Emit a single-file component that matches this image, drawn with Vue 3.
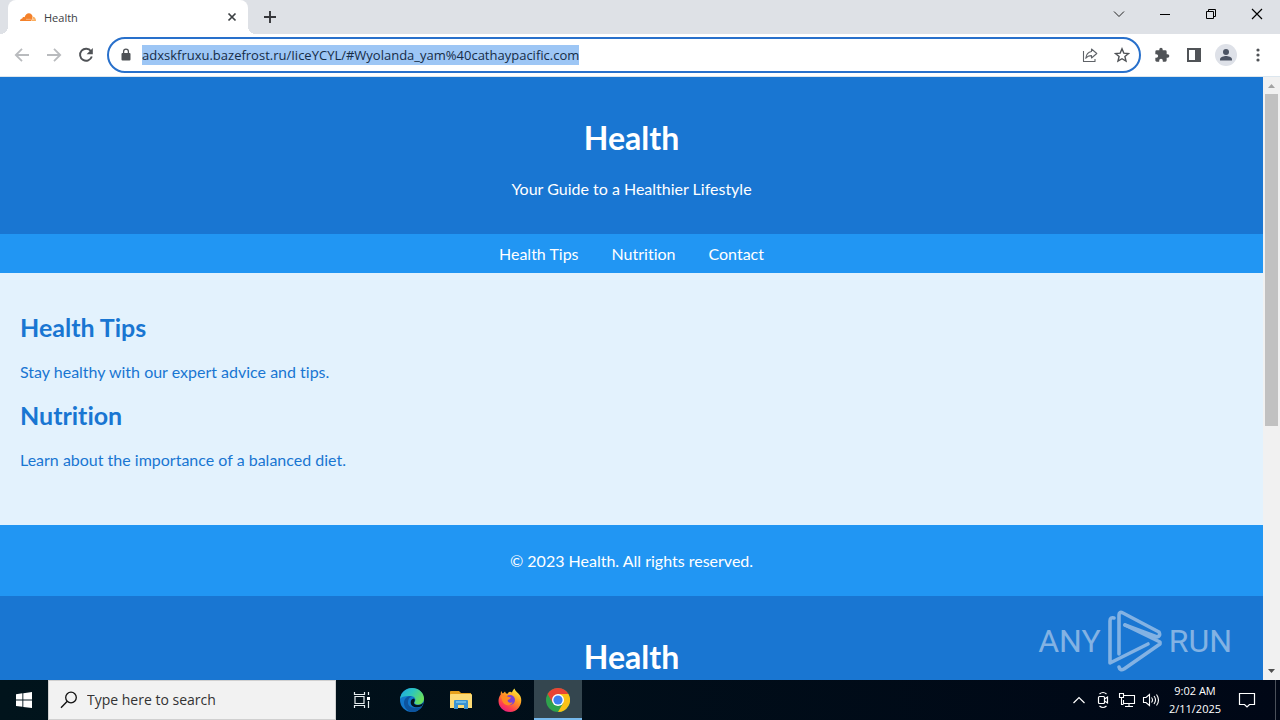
<script setup>
const url = 'adxskfruxu.bazefrost.ru/IiceYCYL/#Wyolanda_yam%40cathaypacific.com'
const links = ['Health Tips', 'Nutrition', 'Contact']
const articles = [
  { title: 'Health Tips', text: 'Stay healthy with our expert advice and tips.' },
  { title: 'Nutrition', text: 'Learn about the importance of a balanced diet.' },
]
</script>

<template>
  <div class="desktop">
    <div class="tabstrip">
      <div class="tab">
        <svg width="16" height="16" viewBox="0 0 16 16">
          <path d="M0 12c0-1.700 1-2.600 2.300-2.600.1-1.200 1.300-1.800 2.300-1.200C5.400 5.800 7 4.300 8.900 4.300c2 0 3.300 1.300 3.700 3.200L11.300 12z" fill="#f4812a" />
          <path d="M12.800 7.700c1.900 0 3.200 1.600 3.200 4.300h-4.300z" fill="#fbad5c" />
          <path d="M6 10.300h4.800M12 10.300h2.300" stroke="#fff" stroke-width=".4" />
        </svg>
        <span class="tab-title">Health</span>
        <button class="tab-close" aria-label="Close tab">
          <svg width="16" height="16" viewBox="0 0 16 16"><path d="M4.500 4.500l7 7M11.500 4.500l-7 7" stroke="#3c4043" stroke-width="1.700" /></svg>
        </button>
      </div>
      <button class="new-tab" aria-label="New tab">
        <svg width="16" height="16" viewBox="0 0 16 16"><path d="M8 2v12M2 8h12" stroke="#35363a" stroke-width="1.900" /></svg>
      </button>
      <div class="window-buttons">
        <button aria-label="Search tabs"><svg width="12" height="12" viewBox="0 0 12 12"><path d="M1 3.500l5 5 5-5" fill="none" stroke="#222" /></svg></button>
        <button aria-label="Minimize"><svg width="12" height="12" viewBox="0 0 12 12"><path d="M1 6.500h10" stroke="#000" /></svg></button>
        <button aria-label="Restore"><svg width="12" height="12" viewBox="0 0 12 12"><path d="M1.500 3.500h7v7h-7zM3.500 3.500v-2h7v7h-2" fill="none" stroke="#000" /></svg></button>
        <button aria-label="Close"><svg width="12" height="12" viewBox="0 0 12 12"><path d="M1 1l10 10M11 1L1 11" stroke="#000" stroke-width="1.200" /></svg></button>
      </div>
    </div>

    <div class="toolbar">
      <button class="tool" aria-label="Back"><svg width="16" height="16" viewBox="0 0 16 16"><path d="M15 8H2M8 1.800L1.800 8 8 14.200" fill="none" stroke="#b9bbbe" stroke-width="1.800" /></svg></button>
      <button class="tool" aria-label="Forward"><svg width="16" height="16" viewBox="0 0 16 16"><path d="M1 8h13M8 1.800L14.200 8 8 14.200" fill="none" stroke="#b9bbbe" stroke-width="1.800" /></svg></button>
      <button class="tool" aria-label="Reload"><svg width="16" height="16" viewBox="0 0 16 16"><path d="M13 4.300A6 6 0 1 0 13.800 9.500" fill="none" stroke="#4f5256" stroke-width="1.900" /><path d="M14.800 1v6.200H8.600z" fill="#4f5256" /></svg></button>
      <div class="omnibox">
        <svg width="16" height="16" viewBox="0 0 16 16"><rect x="3.500" y="6" width="9" height="7.500" rx="1" fill="#4f5256" /><path d="M5.600 6.500V4.600a2.400 2.400 0 0 1 4.800 0v1.900" fill="none" stroke="#4f5256" stroke-width="1.300" /></svg>
        <input class="address" type="text" :value="url" aria-label="Address" spellcheck="false" />
        <div class="omnibox-actions">
          <button aria-label="Share"><svg width="16" height="16" viewBox="0 0 16 16"><path d="M1.500 4v10.500H13V12M9.500 2l5.300 4.500L9.500 11V8.600C7 8.600 5.200 9.300 3.800 11.300 4.200 7.500 6.300 5 9.500 4.500z" fill="none" stroke="#5f6368" stroke-width="1.100" stroke-linejoin="round" /></svg></button>
          <button aria-label="Bookmark"><svg width="16" height="16" viewBox="0 0 16 16"><path d="M8 1.800l1.800 4.300 4.700.4-3.600 3 1.100 4.600L8 11.700 4 14.100l1.100-4.600-3.600-3 4.700-.4z" fill="none" stroke="#4f5256" stroke-width="1.400" /></svg></button>
        </div>
      </div>
      <div class="extras">
        <button aria-label="Extensions"><svg width="16" height="16" viewBox="0 0 24 24"><path d="M20.500 11H19V7a2 2 0 0 0-2-2h-4V3.500a2.500 2.500 0 0 0-5 0V5H4a2 2 0 0 0-2 2v3.800h1.500a2.700 2.700 0 0 1 0 5.400H2V20c0 1.100.9 2 2 2h3.800v-1.500a2.700 2.700 0 0 1 5.400 0V22H17a2 2 0 0 0 2-2v-4h1.500a2.500 2.500 0 0 0 0-5z" fill="#505357" /></svg></button>
        <button aria-label="Side panel"><svg width="16" height="16" viewBox="0 0 16 16"><path d="M1 1h14v14H1zM3 3v10h6V3z" fill="#505357" fill-rule="evenodd" /></svg></button>
        <button aria-label="Profile"><svg width="22" height="22" viewBox="0 0 22 22"><circle cx="11" cy="11" r="11" fill="#dee1e8" /><circle cx="11" cy="8" r="3" fill="#4c5464" /><path d="M5 16.500v-1.300C5 13 9 12 11 12s6 1 6 3.200v1.300z" fill="#4c5464" /></svg></button>
        <button aria-label="Menu"><svg width="16" height="16" viewBox="0 0 16 16" fill="#505357"><circle cx="8" cy="3" r="1.600" /><circle cx="8" cy="8" r="1.600" /><circle cx="8" cy="13" r="1.600" /></svg></button>
      </div>
    </div>

    <div class="viewport">
      <div class="page">
        <header class="hero">
          <h1>Health</h1>
          <p>Your Guide to a Healthier Lifestyle</p>
        </header>
        <nav class="menu">
          <a v-for="link in links" :key="link" href="#">{{ link }}</a>
        </nav>
        <main class="content">
          <section v-for="item in articles" :key="item.title">
            <h2>{{ item.title }}</h2>
            <p>{{ item.text }}</p>
          </section>
        </main>
        <footer class="foot"><p>© 2023 Health. All rights reserved.</p></footer>
        <header class="hero">
          <h1>Health</h1>
        </header>
      </div>
      <div class="scrollbar">
        <svg width="17" height="17" viewBox="0 0 17 17"><path d="M5 11l3.500-4 3.500 4z" fill="#a3a3a3" /></svg>
        <div class="thumb"></div>
        <svg class="down" width="17" height="17" viewBox="0 0 17 17"><path d="M5 6l3.500 4L12 6z" fill="#505050" /></svg>
      </div>
      <div class="watermark">
        <span>ANY</span>
        <svg width="56" height="62" viewBox="0 0 56 62" fill="none" stroke="currentColor" stroke-width="3.600" stroke-linejoin="round" stroke-linecap="round">
          <path d="M7 8Q3 7 3 11V53L41 34" />
          <path d="M12 44V5Q12 1 16 3L52 22Q54 26 50 27L18 15" />
          <path d="M18 15L53 32V34L17 59Q13 61 12 57" />
        </svg>
        <span>RUN</span>
      </div>
    </div>

    <div class="taskbar">
      <button class="task start" aria-label="Start"><svg width="16" height="16" viewBox="0 0 16 16" fill="#fff"><path d="M0 2.200L6.400 1.300V7.500H0zM7.300 1.200L16 0v7.500H7.300zM0 8.500h6.400v6.300L0 13.900zM7.300 8.500H16V16l-8.700-1.100z" /></svg></button>
      <label class="search">
        <svg width="18" height="18" viewBox="0 0 18 18"><circle cx="11" cy="6.500" r="5.300" fill="none" stroke="#111" stroke-width="1.300" /><path d="M7.300 10.300L1 16.800" stroke="#111" stroke-width="1.400" /></svg>
        <input type="text" placeholder="Type here to search" aria-label="Search" />
      </label>
      <button class="task" aria-label="Task view"><svg width="18" height="18" viewBox="0 0 18 18" fill="none" stroke="#e8eef0" stroke-width="1.200"><path d="M1.500 1v2.500h10V1M1.500 17v-2.500h10V17M2 5.500h9v7H2zM15.500 1v3M15.500 10v7" /><path d="M14 6h3v3h-3z" fill="#fff" stroke="none" /></svg></button>
      <button class="task" aria-label="Edge">
        <svg width="24" height="24" viewBox="0 0 24 24">
          <defs><linearGradient id="edge-top" x1="0" y1="0" x2="1" y2=".5"><stop offset="0" stop-color="#1fa5e4" /><stop offset=".5" stop-color="#2cc5c0" /><stop offset="1" stop-color="#69df5a" /></linearGradient></defs>
          <circle cx="12" cy="12" r="12" fill="#1277cb" />
          <path d="M0 11C1 4 6 0 12 0c7 0 12 5 12 10.500 0 4-3 6-6 6-2.500 0-4.500-1-3-3 1.500-2.500-1-5.500-4-5.500C6 8 2 8 0 11z" fill="url(#edge-top)" />
          <path d="M8 15c0-3 1-6 4-6.500-2-.8-7-.4-8 5.500-.6 5 3.500 9.500 8 10 4 0 8-2 10-5.500-6 3-14 1-14-3.500z" fill="#0d549e" />
          <path d="M14 10.500c1 1 1 2 .4 3.200-1.500 2 1 3.500 4 3.200 2 0 4-1 5-2.700-.4 1.700-.9 3-1.700 4.100-6 2.500-11 .2-11-3.800 0-2 1-3.700 3.300-4z" fill="#04141d" />
        </svg>
      </button>
      <button class="task" aria-label="File Explorer">
        <svg width="22" height="20" viewBox="0 0 22 20"><path d="M0 1.500Q0 1 1 1h8l2 2h10v5H0z" fill="#e6a11c" /><path d="M1 4h20q1 0 1 1v13H0V5q0-1 1-1z" fill="#fddb75" /><path d="M4 11q0-1 1-1h12q1 0 1 1v8h-4v-4H8v4H4z" fill="#3b93d1" /><path d="M6 12h10" stroke="#68b9e8" stroke-width="2" /></svg>
      </button>
      <button class="task" aria-label="Firefox">
        <svg width="24" height="24" viewBox="0 0 24 24">
          <defs><linearGradient id="fox" x1=".8" y1="0" x2=".2" y2="1"><stop offset="0" stop-color="#fff33f" /><stop offset=".4" stop-color="#ff9a22" /><stop offset=".75" stop-color="#ff3f50" /><stop offset="1" stop-color="#e3158b" /></linearGradient></defs>
          <path d="M3.500 3c.2 1 .7 2 1.400 2.600L7 3.500l1 2c.6 0 1 0 1.600.3C10.500 4 12 3.200 14 4.500c.5-1.700 1.400-3 2.600-4C17 4 22 5 23 10c.8 4-.3 7.500-2.500 10-2.200 2.600-5 4-8.500 4C5.500 24 .5 19 .5 13c0-3 1-5 2.200-6.500C2.600 5 2.800 4 3.500 3z" fill="url(#fox)" />
          <circle cx="12" cy="12" r="5" fill="#7942d8" />
          <path d="M3 8c3-1 5-.5 7 .8 1.500.6 2.700.2 3 .8-.4 1.500-2.500 1.700-3.500 3 .4 2.400 3.800 2.500 5.200 1.700-1 2.500-4.700 4.200-8 2C4.200 14.500 3.600 11 3 8z" fill="#ff8a21" />
        </svg>
      </button>
      <button class="task active" aria-label="Chrome">
        <svg width="24" height="24" viewBox="0 0 24 24">
          <circle cx="12" cy="12" r="12" fill="#2fa24c" />
          <path d="M12 6H22.400A12 12 0 0 1 12 24L17.200 15z" fill="#fbc116" />
          <path d="M6.800 15L1.600 6A12 12 0 0 1 22.400 6H12z" fill="#e94335" />
          <circle cx="12" cy="12" r="6" fill="#fff" /><circle cx="12" cy="12" r="4.600" fill="#3c7ff0" />
        </svg>
      </button>
      <div class="tray">
        <button aria-label="Hidden icons"><svg width="14" height="16" viewBox="0 0 14 16"><path d="M1.500 11L7 5.500l5.500 5.500" fill="none" stroke="#fff" stroke-width="1.200" /></svg></button>
        <button aria-label="Meet now"><svg width="14" height="18" viewBox="0 0 14 18" fill="none" stroke="#fff" stroke-width="1.200"><rect x="2.500" y="5.500" width="6" height="7" rx="1" /><path d="M8.500 8l3-2v6l-3-2M3.500 3q3.500-3 7 0M3.500 15q3.500 3 7 0" /></svg></button>
        <button aria-label="Network"><svg width="18" height="16" viewBox="0 0 18 16" fill="none" stroke="#fff" stroke-width="1.100"><path d="M6 3.500h10.500v8H5.500V8M11 11.500v3M7 14.500h8M1.500 1.500h4v4h-4zM3.500 5.500v7h2" /></svg></button>
        <button aria-label="Volume"><svg width="18" height="16" viewBox="0 0 18 16" fill="none" stroke="#fff" stroke-width="1.100"><path d="M1.500 5.500H4L7.500 2.500v11L4 10.500H1.500zM9.500 5.500q2 2.500 0 5M12 4q3 4 0 8M14.500 2.500q4 5.500 0 11" /></svg></button>
        <div class="clock"><span>9:02 AM</span><span>2/11/2025</span></div>
        <button class="notices" aria-label="Notifications"><svg width="18" height="18" viewBox="0 0 18 18"><path d="M1.500 2.500h15v11h-5L9 16l-2.500-2.500h-5z" fill="none" stroke="#fff" stroke-width="1.200" /></svg></button>
        <div class="peek"></div>
      </div>
    </div>
  </div>
</template>

<style>
body { margin: 0; }
</style>

<style scoped>
.desktop { display: flex; flex-direction: column; height: 100vh; overflow: hidden; font-family: "Open Sans", "Noto Sans", sans-serif; background: #fff; }
button { border: 0; padding: 0; background: none; display: flex; align-items: center; justify-content: center; font: inherit; flex: none; }
svg { flex: none; display: block; }

.tabstrip { display: flex; height: 34px; background: #dee1e6; flex: none; }
.tab { position: relative; display: flex; align-items: center; gap: 8px; width: 240px; box-sizing: border-box; margin-left: 8px; padding: 0 8px 0 12px; background: #fff; border-radius: 8px 8px 0 0; }
.tab::before, .tab::after { content: ""; position: absolute; bottom: 0; width: 8px; height: 8px; }
.tab::before { right: 100%; background: radial-gradient(circle at 0 0, transparent 8px, #fff 8px); }
.tab::after { left: 100%; background: radial-gradient(circle at 100% 0, transparent 8px, #fff 8px); }
.tab-title { flex: 1; font-size: 11px; color: #3c4043; }
.new-tab { width: 28px; margin-left: 8px; }
.window-buttons { display: flex; margin-left: auto; height: 28px; }
.window-buttons button { width: 46px; }

.toolbar { display: flex; align-items: center; height: 42px; border-bottom: 1px solid #dce6ee; flex: none; padding-left: 6px; }
.tool { width: 32px; height: 32px; }
.omnibox { display: flex; align-items: center; flex: 1; height: 36px; box-sizing: border-box; margin: 0 5px; padding: 0 9px; border: 2px solid #2870cb; border-radius: 18px; }
.address { field-sizing: content; height: 20px; margin-left: 8px; padding: 0; border: 0; outline: 0; background: #9dc6f5; color: #152c47; font: 13px/20px "Open Sans", "Noto Sans", sans-serif; }
.omnibox-actions { display: flex; gap: 16px; margin-left: auto; }
.extras { display: flex; padding-right: 6px; }
.extras button { width: 32px; height: 32px; }

.viewport { position: relative; display: flex; flex: 1; min-height: 0; overflow: hidden; }
.page { flex: 1; overflow: hidden; font: 16px/19px Lato, sans-serif; font-variant-ligatures: none; color: #1976d2; background: #1976d2; }
.hero { padding: 20px; text-align: center; color: #fff; background: #1976d2; }
h1 { margin: 21px 0; font-size: 32px; line-height: 40px; }
p { margin: 16px 0; }
.menu { display: flex; justify-content: center; gap: 33px; padding: 10px; background: #2196f3; }
.menu a { color: #fff; text-decoration: none; }
.content { padding: 20px 20px 40px; background: #e3f2fd; }
h2 { margin: 20px 0; font-size: 25px; line-height: 29px; }
.foot { padding: 10px; text-align: center; color: #fff; background: #2196f3; display: flow-root; }
.scrollbar { display: flex; flex-direction: column; width: 17px; background: #f1f1f1; }
.thumb { height: 55%; margin: 0 2px; background: #c1c1c1; }
.down { margin-top: auto; }
.watermark { position: absolute; right: 48px; bottom: 8px; display: flex; align-items: center; gap: 6px; color: #83b2e3; font: 32px/62px Roboto, sans-serif; }

.taskbar { display: flex; height: 40px; flex: none; background: linear-gradient(90deg, #01141c, #000716); }
.task { width: 49px; }
.task.start { width: 48px; }
.search + .task { width: 51px; }
.task.active { width: 48px; background: #34464f; box-shadow: inset 0 -2px #76b9ed; }
.search { display: flex; align-items: center; gap: 9px; width: 288px; box-sizing: border-box; padding: 0 11px; background: #f2f2f2; border: 1px solid #d0d0d0; }
.search input { flex: 1; min-width: 0; padding: 0; border: 0; outline: 0; background: none; font: 14px/20px "Open Sans", "Noto Sans", sans-serif; }
.search input::placeholder { color: #333; opacity: 1; }
.tray { display: flex; align-items: center; margin-left: auto; color: #fff; }
.tray button { width: 24px; height: 40px; }
.clock { display: flex; flex-direction: column; align-items: center; width: 64px; font-size: 11px; line-height: 18px; }
.tray .notices { width: 40px; }
.peek { width: 5px; height: 40px; box-sizing: border-box; border-left: 1px solid #4a505a; margin-left: 8px; }
</style>
